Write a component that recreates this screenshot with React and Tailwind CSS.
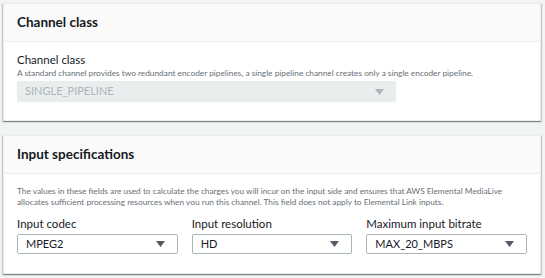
import React from 'react';

function Arrow({ disabled }) {
    return (
        <svg width="9" height="6" viewBox="0 0 9 6" className="shrink-0">
            <path d="M0 0 L9 0 L4.5 6 Z" fill={disabled ? '#aab7b8' : '#545b64'} />
        </svg>
    );
}

function Select({ value, disabled = false, className = '' }) {
    return (
        <div
            className={`flex items-center justify-between h-[20px] px-2 pr-3 rounded-[2px] text-[11px] ${
                disabled
                    ? 'bg-[#eaeded] text-[#aab7b8]'
                    : 'bg-white border border-[#aab7b8] text-[#16191f]'
            } ${className}`}
        >
            <span>{value}</span>
            <Arrow disabled={disabled} />
        </div>
    );
}

function Card({ title, children }) {
    return (
        <div className="bg-white border border-[#eaeded] shadow-[0_1px_1px_0_rgba(0,28,36,0.3),1px_1px_1px_0_rgba(0,28,36,0.15),-1px_1px_1px_0_rgba(0,28,36,0.15)]">
            <div className="h-[38px] px-[13px] flex items-center bg-[#fafafa] border-b border-[#eaeded]">
                <h2 className="text-[13.5px] font-bold text-[#16191f]">{title}</h2>
            </div>
            {children}
        </div>
    );
}

export default function App() {
    return (
        <div
            className="w-[545px] h-[278px] bg-[#f2f3f3] pt-[3px] pl-[3px] pr-[4px] flex flex-col gap-[14px] overflow-hidden"
            style={{ fontFamily: 'Lato, "Open Sans", sans-serif' }}
        >
            {/* Channel class */}
            <Card title="Channel class">
                <div className="px-[13px] pt-[11px] pb-[18px]">
                    <div className="text-[11.5px] leading-[14px] text-[#16191f]">Channel class</div>
                    <div className="text-[8.3px] leading-[12px] text-[#687078]">
                        A standard channel provides two redundant encoder pipelines, a single pipeline channel creates only a single encoder pipeline.
                    </div>
                    <Select value="SINGLE_PIPELINE" disabled className="w-[379px] h-[21px] mt-[2px]" />
                </div>
            </Card>

            {/* Input specifications */}
            <Card title="Input specifications">
                <div className="px-[13px] pt-[12px] pb-[19px]">
                    <p className="text-[8.3px] leading-[11px] text-[#687078] pr-[14px]">
                        The values in these fields are used to calculate the charges you will incur on the input side and ensures that AWS Elemental MediaLive allocates sufficient processing resources when you run this channel. This field does not apply to Elemental Link inputs.
                    </p>
                    <div className="grid grid-cols-3 gap-[14px] mt-[9px]">
                        <div>
                            <div className="text-[11.5px] leading-[14px] text-[#16191f] mb-[3px]">Input codec</div>
                            <Select value="MPEG2" />
                        </div>
                        <div>
                            <div className="text-[11.5px] leading-[14px] text-[#16191f] mb-[3px]">Input resolution</div>
                            <Select value="HD" />
                        </div>
                        <div>
                            <div className="text-[11.5px] leading-[14px] text-[#16191f] mb-[3px]">Maximum input bitrate</div>
                            <Select value="MAX_20_MBPS" />
                        </div>
                    </div>
                </div>
            </Card>
        </div>
    );
}
